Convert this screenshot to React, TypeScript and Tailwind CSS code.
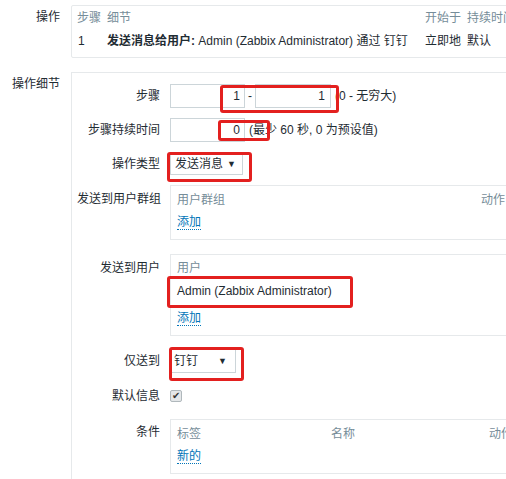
import React from "react";

const font = {
  fontFamily: '"Liberation Sans", Arial, "Noto Sans CJK SC", sans-serif',
};

function Red({ x, y, w, h }: { x: number; y: number; w: number; h: number }) {
  return (
    <div
      className="absolute border-[3px] border-[#e3201f] rounded-[3px] pointer-events-none"
      style={{ left: x, top: y, width: w, height: h }}
    />
  );
}

function Label({ children }: { children: React.ReactNode }) {
  return <div className="w-[83px] shrink-0 text-right mr-[10px] whitespace-nowrap">{children}</div>;
}

function Link({ children }: { children: React.ReactNode }) {
  return (
    <span className="text-[#0275b8] border-b border-dotted border-[#0275b8] leading-[14px]">{children}</span>
  );
}

export default function App() {
  return (
    <div
      className="relative w-[506px] h-[479px] overflow-hidden bg-white text-[12px] leading-[14px] text-[#1f2c33]"
      style={font}
    >
      {/* 操作 */}
      <div className="flex pt-[5px]">
        <div className="w-[60px] shrink-0 text-right pt-[5px]">操作</div>
        <div className="ml-[11px] w-[520px] h-[53px] border border-[#e6e9eb] rounded-[2px] shrink-0 pl-[5px] pt-[5px]">
          <div className="flex text-[#768d99] h-[14px]">
            <div className="w-[30px]">步骤</div>
            <div className="w-[318px]">细节</div>
            <div className="w-[42px]">开始于</div>
            <div className="whitespace-nowrap">持续时间</div>
          </div>
          <div className="flex mt-[9px] h-[14px]">
            <div className="w-[30px] pl-[1px]">1</div>
            <div className="w-[318px] whitespace-nowrap">
              <span className="font-bold">发送消息给用户:</span> Admin (Zabbix Administrator) 通过 钉钉
            </div>
            <div className="w-[42px]">立即地</div>
            <div className="whitespace-nowrap">默认</div>
          </div>
        </div>
      </div>

      {/* 操作细节 */}
      <div className="flex mt-[14px]">
        <div className="w-[60px] shrink-0 text-right pt-[5px]">操作细节</div>
        <div className="ml-[11px] w-[520px] h-[420px] border-l border-t border-[#e6e9eb] shrink-0 pl-[5px] pt-[11px]">
          {/* 步骤 */}
          <div className="flex items-center h-[24px]">
            <Label>步骤</Label>
            <div className="w-[75px] h-[24px] border border-[#ccd5d9] flex items-center justify-end pr-[4px]">1</div>
            <div className="w-[10px] text-center">-</div>
            <div className="w-[76px] h-[24px] border border-[#ccd5d9] flex items-center justify-end pr-[5px]">1</div>
            <div className="ml-[4px] whitespace-nowrap">(0 - 无穷大)</div>
          </div>
          {/* 步骤持续时间 */}
          <div className="flex items-center h-[24px] mt-[10px]">
            <Label>步骤持续时间</Label>
            <div className="w-[75px] h-[24px] border border-[#ccd5d9] flex items-center justify-end pr-[4px]">0</div>
            <div className="ml-[4px] whitespace-nowrap">(最少 60 秒, 0 为预设值)</div>
          </div>
          {/* 操作类型 */}
          <div className="flex items-center h-[22px] mt-[11px]">
            <Label>操作类型</Label>
            <div className="w-[73px] h-[22px] border border-[#ccd5d9] flex items-center justify-between pl-[4px] pr-[6px]">
              <span>发送消息</span>
              <span className="text-[9px]">▼</span>
            </div>
          </div>
          {/* 发送到用户群组 */}
          <div className="flex mt-[10px]">
            <Label>
              <div className="pt-[7px]">发送到用户群组</div>
            </Label>
            <div className="w-[400px] h-[55px] border border-[#e6e9eb] shrink-0 pl-[6px] pt-[7px]">
              <div className="flex text-[#768d99]">
                <div className="w-[304px]">用户群组</div>
                <div>动作</div>
              </div>
              <div className="mt-[8px]">
                <Link>添加</Link>
              </div>
            </div>
          </div>
          {/* 发送到用户 */}
          <div className="flex mt-[14px]">
            <Label>
              <div className="pt-[7px]">发送到用户</div>
            </Label>
            <div className="w-[400px] h-[82px] border border-[#e6e9eb] shrink-0 pl-[6px] pt-[6px]">
              <div className="text-[#768d99]">用户</div>
              <div className="mt-[9px]">Admin (Zabbix Administrator)</div>
              <div className="mt-[13px]">
                <Link>添加</Link>
              </div>
            </div>
          </div>
          {/* 仅送到 */}
          <div className="flex items-center h-[24px] mt-[13px]">
            <Label>仅送到</Label>
            <div className="w-[66px] h-[24px] border border-[#ccd5d9] flex items-center justify-between pl-[3px] pr-[8px]">
              <span>钉钉</span>
              <span className="text-[9px]">▼</span>
            </div>
          </div>
          {/* 默认信息 */}
          <div className="flex items-center h-[12px] mt-[17px]">
            <Label>默认信息</Label>
            <div className="w-[12px] h-[12px] border border-[#b0b8bc] bg-[#e4e7e9] rounded-[2px] flex items-center justify-center text-[10px] leading-none text-[#333]">
              ✔
            </div>
          </div>
          {/* 条件 */}
          <div className="flex mt-[17px]">
            <Label>
              <div className="pt-[6px]">条件</div>
            </Label>
            <div className="w-[400px] h-[55px] border border-[#e6e9eb] shrink-0 pl-[6px] pt-[7px]">
              <div className="flex text-[#768d99]">
                <div className="w-[154px]">标签</div>
                <div className="w-[158px]">名称</div>
                <div>动作</div>
              </div>
              <div className="mt-[8px]">
                <Link>新的</Link>
              </div>
            </div>
          </div>
        </div>
      </div>

      <Red x={220} y={85} w={119} h={28} />
      <Red x={218} y={120} w={52} h={21} />
      <Red x={167} y={152} w={85} h={30} />
      <Red x={167} y={276} w={186} h={32} />
      <Red x={169} y={347} w={75} h={34} />
    </div>
  );
}
